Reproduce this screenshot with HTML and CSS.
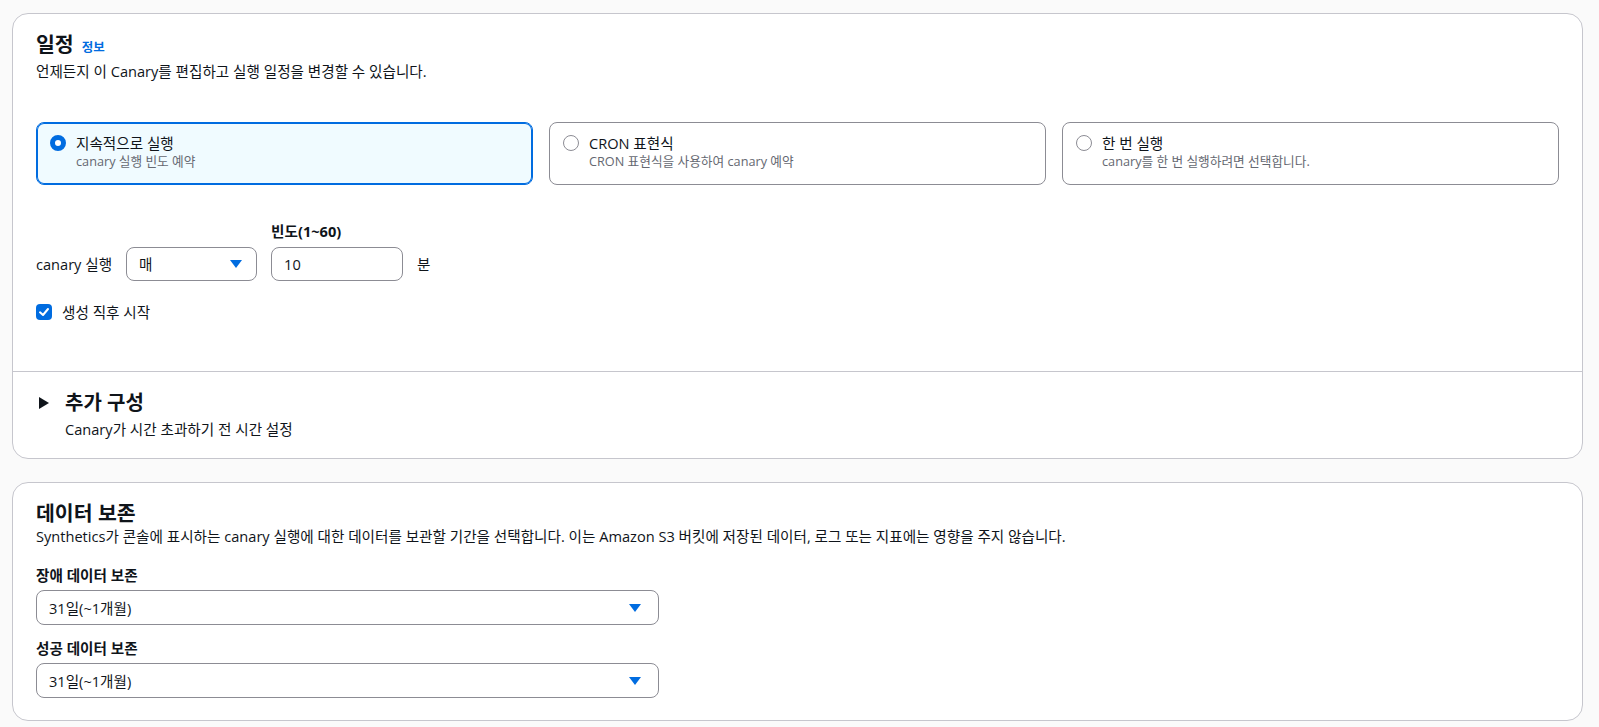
FILE: index.html
```html
<!DOCTYPE html>
<html lang="ko">
<head>
<meta charset="utf-8">
<title>Canary 일정</title>
<link rel="stylesheet" href="styles.css">
</head>
<body>
<div class="page">
  <section class="card">
    <div class="card-head">
      <h2 class="title">일정 <a class="info" href="#">정보</a></h2>
      <p class="desc">언제든지 이 Canary를 편집하고 실행 일정을 변경할 수 있습니다.</p>
    </div>
    <div class="card-body">
      <div class="tiles">
        <label class="tile selected">
          <span class="radio on"></span>
          <span class="tile-text">
            <span class="tile-title">지속적으로 실행</span>
            <span class="tile-sub">canary 실행 빈도 예약</span>
          </span>
        </label>
        <label class="tile">
          <span class="radio"></span>
          <span class="tile-text">
            <span class="tile-title">CRON 표현식</span>
            <span class="tile-sub">CRON 표현식을 사용하여 canary 예약</span>
          </span>
        </label>
        <label class="tile">
          <span class="radio"></span>
          <span class="tile-text">
            <span class="tile-title">한 번 실행</span>
            <span class="tile-sub">canary를 한 번 실행하려면 선택합니다.</span>
          </span>
        </label>
      </div>

      <div class="freq-row">
        <span class="inline-text">canary 실행</span>
        <div class="select small">
          <span>매</span>
          <svg class="caret" width="12" height="8" viewBox="0 0 12 8"><path d="M0 0 H12 L6 8 Z" fill="#006ce0"/></svg>
        </div>
        <div class="field">
          <span class="field-label">빈도(1~60)</span>
          <div class="input">10</div>
        </div>
        <span class="inline-text">분</span>
      </div>

      <label class="check-row">
        <span class="checkbox">
          <svg width="16" height="16" viewBox="0 0 16 16"><path d="M4 8.3 L7 11 L12 5" fill="none" stroke="#fff" stroke-width="2" stroke-linecap="round" stroke-linejoin="round"/></svg>
        </span>
        <span>생성 직후 시작</span>
      </label>
    </div>
    <div class="expander">
      <div class="exp-head">
        <svg class="exp-caret" width="10" height="12" viewBox="0 0 10 12"><path d="M0 0 L10 6 L0 12 Z" fill="#0f141a"/></svg>
        <span class="exp-title">추가 구성</span>
      </div>
      <p class="exp-sub">Canary가 시간 초과하기 전 시간 설정</p>
    </div>
  </section>

  <section class="card">
    <div class="card-head">
      <h2 class="title">데이터 보존</h2>
      <p class="desc">Synthetics가 콘솔에 표시하는 canary 실행에 대한 데이터를 보관할 기간을 선택합니다. 이는 Amazon S3 버킷에 저장된 데이터, 로그 또는 지표에는 영향을 주지 않습니다.</p>
    </div>
    <div class="card-body retention">
      <div class="ret-field">
        <span class="field-label">장애 데이터 보존</span>
        <div class="select wide">
          <span>31일(~1개월)</span>
          <svg class="caret" width="12" height="8" viewBox="0 0 12 8"><path d="M0 0 H12 L6 8 Z" fill="#006ce0"/></svg>
        </div>
      </div>
      <div class="ret-field">
        <span class="field-label">성공 데이터 보존</span>
        <div class="select wide">
          <span>31일(~1개월)</span>
          <svg class="caret" width="12" height="8" viewBox="0 0 12 8"><path d="M0 0 H12 L6 8 Z" fill="#006ce0"/></svg>
        </div>
      </div>
    </div>
  </section>
</div>
</body>
</html>
```

FILE: styles.css
```css
* { box-sizing: border-box; }
html, body { margin: 0; padding: 0; }
body {
  background: #fafafa;
  color: #0f141a;
  font-family: "Open Sans", "Noto Sans CJK KR", sans-serif;
  font-size: 14.6px;
  line-height: 20px;
}
.page {
  padding: 13px 16px 0 12px;
  display: flex;
  flex-direction: column;
  gap: 23px;
}
.card {
  background: #fff;
  border: 1px solid #c6c6cd;
  border-radius: 16px;
}
.card-head {
  padding: 18px 23px 0 23px;
}
.title {
  margin: 0;
  font-size: 20.5px;
  line-height: 24px;
  font-weight: 700;
  display: flex;
  align-items: baseline;
  gap: 8px;
}
.info {
  font-size: 12.5px;
  font-weight: 700;
  color: #006ce0;
  text-decoration: none;
}
.desc {
  margin: 1px 0 0;
  font-size: 14.6px;
  line-height: 20px;
  color: #0f141a;
}
.card-body {
  padding: 0 23px;
}
.tiles {
  margin-top: 41px;
  display: grid;
  grid-template-columns: repeat(3, 1fr);
  gap: 16px;
}
.tile {
  display: flex;
  align-items: flex-start;
  gap: 10px;
  border: 1px solid #8c8c94;
  border-radius: 8px;
  padding: 10px 14px 15px 13px;
  background: #fff;
}
.tile.selected {
  border-color: #006ce0;
  box-shadow: inset 0 0 0 1px #006ce0;
  background: #f0fbff;
}
.radio {
  flex: none;
  width: 16px;
  height: 16px;
  margin-top: 2px;
  border-radius: 50%;
  border: 1px solid #8c8c94;
  background: #fff;
}
.radio.on {
  border: 5px solid #006ce0;
  background: #fff;
}
.tile-text {
  display: flex;
  flex-direction: column;
}
.tile-title {
  font-size: 14.6px;
  line-height: 20px;
}
.tile-sub {
  font-size: 12.7px;
  line-height: 16px;
  color: #656871;
}
.freq-row {
  margin-top: 36px;
  display: flex;
  align-items: flex-end;
  gap: 14px;
}
.inline-text {
  line-height: 34px;
}
.field {
  display: flex;
  flex-direction: column;
  gap: 6px;
}
.field-label {
  font-weight: 700;
  font-size: 14.6px;
  line-height: 20px;
}
.select, .input {
  height: 34px;
  border: 1px solid #8c8c94;
  border-radius: 8px;
  background: #fff;
  display: flex;
  align-items: center;
  padding: 0 12px;
}
.select {
  justify-content: space-between;
}
.select.small { width: 131px; padding-right: 14px; }
.input { width: 132px; }
.select.wide { width: 623px; height: 35px; padding-right: 17px; }
.caret { flex: none; }
.check-row {
  margin-top: 21px;
  display: flex;
  align-items: center;
  gap: 10px;
  padding-bottom: 49px;
}
.checkbox {
  width: 16px;
  height: 16px;
  border-radius: 4px;
  background: #006ce0;
  display: flex;
}
.expander {
  border-top: 1px solid #c6c6cd;
  padding: 19px 23px 19px 26px;
}
.exp-head {
  display: flex;
  align-items: center;
  gap: 16px;
}
.exp-title {
  font-size: 20px;
  line-height: 24px;
  font-weight: 700;
}
.exp-sub {
  margin: 4px 0 0 26px;
  font-size: 14.6px;
  line-height: 20px;
}
.retention {
  padding-top: 19px;
  padding-bottom: 22px;
  display: flex;
  flex-direction: column;
  gap: 13px;
}
.ret-field {
  display: flex;
  flex-direction: column;
  gap: 5px;
}
```
